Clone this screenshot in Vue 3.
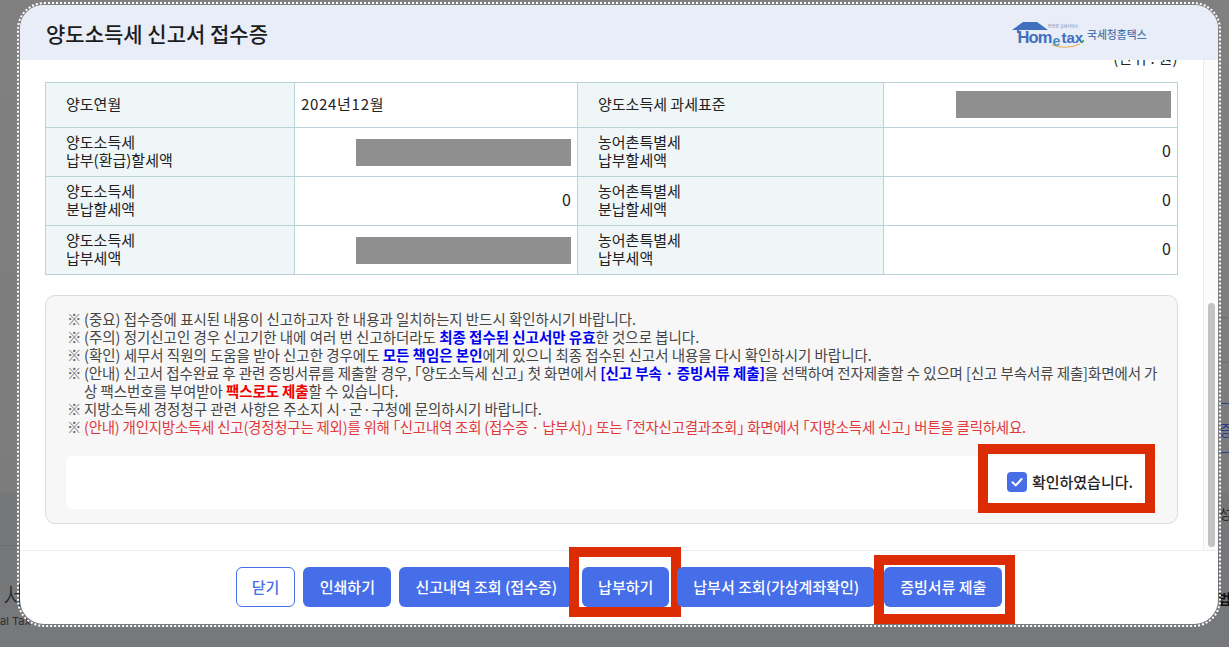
<script setup>
const rows = [
  { a: '양도연월', b: '2024년12월', bLeft: true, c: '양도소득세 과세표준', d: null },
  { a: '양도소득세\n납부(환급)할세액', b: null, c: '농어촌특별세\n납부할세액', d: '0' },
  { a: '양도소득세\n분납할세액', b: '0', c: '농어촌특별세\n분납할세액', d: '0' },
  { a: '양도소득세\n납부세액', b: null, c: '농어촌특별세\n납부세액', d: '0' }
]
</script>

<template>
  <div class="screen">
    <div class="back back-logo">세</div>
    <div class="back back-tax">al Tax</div>
    <div class="back left-line"></div>
    <div class="back back-blue">증</div>
    <div class="back back-r1">성</div>
    <div class="back back-r2">법:</div>
    <div class="back blue-line l1"></div>
    <div class="back blue-line l2"></div>
    <div class="back gray-line g1"></div>
    <div class="back gray-line g2"></div>

    <section class="modal">
      <header class="head">
        <h1>양도소득세 신고서 접수증</h1>
        <svg class="logo" width="140" height="30" viewBox="0 0 140 30" aria-label="Hometax 국세청홈택스">
          <path d="M2 12 L13 4 H27 L38 12 H13 L8 12 Z" fill="#3f6fbd" />
          <path d="M8 11 V15" stroke="#3f6fbd" stroke-width="2" fill="none" />
          <text x="7.5" y="24.5" class="lg-home">Hom</text>
          <text x="42.5" y="27.5" class="lg-e">e</text>
          <text x="51.5" y="24.5" class="lg-tax">tax</text>
          <circle cx="73" cy="23" r="1.2" fill="#55b848" />
          <path d="M42 27 Q56 32 70 26" stroke="#e4a948" stroke-width="1" fill="none" />
          <text x="38" y="10" class="lg-sub">안전성 실세서비스</text>
          <text x="77" y="21" class="lg-kr">국세청홈택스</text>
        </svg>
      </header>

      <div class="body">
        <div class="scroll">
          <p class="unit">(단위 : 원)</p>
          <table class="grid">
            <colgroup>
              <col class="c1" /><col class="c2" /><col class="c3" /><col class="c4" />
            </colgroup>
            <tbody>
              <tr v-for="(r, i) in rows" :key="i" :class="'r' + i">
                <th>{{ r.a }}</th>
                <td :class="{ start: r.bLeft, txt: r.b }">
                  <span v-if="r.b">{{ r.b }}</span>
                  <span v-else class="mask"></span>
                </td>
                <th>{{ r.c }}</th>
                <td :class="{ txt: r.d }">
                  <span v-if="r.d">{{ r.d }}</span>
                  <span v-else class="mask"></span>
                </td>
              </tr>
            </tbody>
          </table>

          <div class="notice">
            <ul>
              <li><i>※</i><span>(중요) 접수증에 표시된 내용이 신고하고자 한 내용과 일치하는지 반드시 확인하시기 바랍니다.</span></li>
              <li><i>※</i><span>(주의) 정기신고인 경우 신고기한 내에 여러 번 신고하더라도 <b class="blue">최종 접수된 신고서만 유효</b>한 것으로 봅니다.</span></li>
              <li><i>※</i><span>(확인) 세무서 직원의 도움을 받아 신고한 경우에도 <b class="blue">모든 책임은 본인</b>에게 있으니 최종 접수된 신고서 내용을 다시 확인하시기 바랍니다.</span></li>
              <li class="tight"><i>※</i><span>(안내) 신고서 접수완료 후 관련 증빙서류를 제출할 경우, <u class="bk">「</u>양도소득세 신고<u class="bk">」</u> 첫 화면에서 <b class="blue">[신고 부속 · 증빙서류 제출]</b>을 선택하여 전자제출할 수 있으며 [신고 부속서류 제출]화면에서 가<br />상 팩스번호를 부여받아 <b class="red">팩스로도 제출</b>할 수 있습니다.</span></li>
              <li><i>※</i><span>지방소득세 경정청구 관련 사항은 주소지 <u class="nar">시 · 군 · 구청에</u> 문의하시기 바랍니다.</span></li>
              <li><i>※</i><span class="alert">(안내) 개인지방소득세 신고(경정청구는 제외)를 위해 <u class="bk">「</u>신고내역 조회 (접수증 · 납부서)<u class="bk">」</u> 또는 <u class="bk">「</u>전자신고결과조회<u class="bk">」</u> 화면에서 <u class="bk">「</u>지방소득세 신고<u class="bk">」</u> 버튼을 클릭하세요.</span></li>
            </ul>
            <div class="confirm">
              <label class="check">
                <span class="box">
                  <svg width="20" height="20" viewBox="0 0 20 20"><path d="M5.5 10.2 L8.8 13.4 L14.6 7" stroke="#fff" stroke-width="2" fill="none" stroke-linecap="round" stroke-linejoin="round" /></svg>
                </span>
                확인하였습니다.
              </label>
              <div class="mark mark-check"></div>
            </div>
          </div>
        </div>
        <div class="bar"><div class="thumb"></div></div>
      </div>

      <footer class="foot">
        <button class="btn ghost">닫기</button>
        <button class="btn print">인쇄하기</button>
        <button class="btn">신고내역 조회 (접수증)</button>
        <button class="btn marked">납부하기<span class="mark mark-pay"></span></button>
        <button class="btn">납부서 조회(가상계좌확인)</button>
        <button class="btn marked">증빙서류 제출<span class="mark mark-doc"></span></button>
      </footer>
    </section>
  </div>
</template>

<style>
html, body { margin: 0; padding: 0; overflow: hidden; }
</style>

<style scoped>
.screen {
  position: relative;
  width: 1229px;
  height: 647px;
  overflow: hidden;
  padding: 5px 11px 23px 20px;
  box-sizing: border-box;
  background: linear-gradient(#808080 0, #7c7c7d 492px, #767779 494px, #77787b 647px);
  font-family: "Noto Sans CJK KR", "Noto Sans", sans-serif;
  color: #222;
}
.back { position: absolute; color: #222; line-height: 1; }
.back-logo { left: 3px; top: 581px; font-size: 28px; font-weight: 300; color: #2a2a2a; }
.back-tax { left: 0; top: 616px; font-size: 11px; font-family: "Inter", sans-serif; color: #2d2d2d; white-space: nowrap; }
.left-line { left: 0; top: 545px; width: 20px; height: 1px; background: #6d6e70; }
.back-blue { left: 1219px; top: 422px; font-size: 15px; color: #2a3f86; }
.back-r1 { left: 1219px; top: 506px; font-size: 14px; color: #2a2a2a; white-space: nowrap; }
.back-r2 { left: 1218px; top: 591px; font-size: 14px; font-weight: 700; color: #111; white-space: nowrap; }
.blue-line { left: 1219px; width: 10px; height: 1px; background: #2a3f86; }
.l1 { top: 403px; }
.l2 { top: 452px; }
.gray-line { left: 1219px; width: 10px; height: 1px; background: #6a6f70; }
.g1 { top: 317px; }
.g2 { top: 362px; }

.modal {
  position: relative;
  display: flex;
  flex-direction: column;
  height: 100%;
  border-radius: 24px;
  background: #fff;
  outline: 2px dotted #fff;
  outline-offset: 1px;
  overflow: hidden;
}
.head {
  flex: none;
  height: 55px;
  display: flex;
  align-items: center;
  justify-content: space-between;
  padding: 0 68px 0 26px;
  background: #e8edf7;
}
.head h1 {
  margin: 0;
  font-size: 21px;
  font-weight: 500;
  line-height: 28px;
  color: #1c1c1c;
}
.logo { display: block; margin-top: 1px; }
.lg-home { font: 700 16.5px "Liberation Sans", sans-serif; fill: #3f6fbd; letter-spacing: -0.9px; }
.lg-tax { font: 700 15px "Liberation Sans", sans-serif; fill: #3f6fbd; }
.lg-e { font: 700 14px "Liberation Sans", sans-serif; fill: #3f8fc4; }
.lg-sub { font-size: 4px; fill: #6f86b3; }
.lg-kr { font-size: 10.8px; font-weight: 500; fill: #4f74ab; }

.body { flex: 1; min-height: 0; display: flex; }
.scroll { flex: 1; min-width: 0; overflow: hidden; padding: 0 25px; }
.bar {
  flex: none;
  width: 15px;
  box-sizing: border-box;
  padding: 243px 3px 3px 4px;
  background: #fbfbfb;
  border-left: 1px solid #ececec;
}
.thumb { height: 244px; border-radius: 4px; background: #c2c2c2; }

.unit {
  margin: -11px 0 15px;
  text-align: right;
  font-size: 15px;
  letter-spacing: 0.3px;
  line-height: 18px;
  color: #222;
}

.grid {
  width: 1132px;
  table-layout: fixed;
  border-collapse: collapse;
  font-size: 15px;
  line-height: 18px;
  color: #222;
}
.c1 { width: 249px; }
.c2 { width: 283px; }
.c3 { width: 306px; }
.c4 { width: 294px; }
.grid th, .grid td { border: 1px solid #b9d3d8; padding: 0; }
.grid th {
  background: #eff6f7;
  text-align: left;
  font-weight: 400;
  padding: 0 0 2px 20px;
  white-space: pre-line;
}
.grid td { text-align: right; padding-right: 6px; font-size: 16px; }
.grid td.txt { padding-bottom: 4px; }
.grid td.start { text-align: left; padding-left: 6px; font-size: 15px; letter-spacing: 0.7px; }
.r0 { height: 45px; }
.r0 td, .grid .r0 td.txt { padding-bottom: 2px; }
.r1, .r2, .r3 { height: 49px; }
.mask {
  display: inline-block;
  vertical-align: middle;
  width: 215px;
  height: 27px;
  background: #8f8f8f;
}

.notice {
  margin-top: 20px;
  box-sizing: border-box;
  height: 229px;
  padding: 14px 20px;
  border: 1px solid #dcdcdc;
  border-radius: 10px;
  background: #f7f7f7;
}
.notice ul { margin: 0; padding: 0; list-style: none; font-size: 14.48px; line-height: 18px; color: #454545; white-space: nowrap; }
.notice li { display: flex; }
.notice li i { flex: none; width: 18px; padding-left: 1px; box-sizing: border-box; font-style: normal; color: #666; letter-spacing: 0; }
.notice b { font-weight: 700; }
.notice u { text-decoration: none; }
.bk { font-feature-settings: "halt"; }
.nar { word-spacing: -2.7px; }
.tight { letter-spacing: -0.07px; }
.blue { color: #0000f0; }
.red { color: #f00000; }
.alert { color: #e03a3f; letter-spacing: -0.22px; }

.confirm {
  position: relative;
  margin-top: 20px;
  height: 53px;
  box-sizing: border-box;
  padding: 0 24px 2px 0;
  display: flex;
  align-items: center;
  justify-content: flex-end;
  border-radius: 6px;
  background: #fff;
}
.check { display: flex; align-items: center; gap: 5px; font-size: 15px; font-weight: 500; color: #222; }
.box { width: 20px; height: 20px; border-radius: 4px; background: #476ee6; display: block; }
.box svg { display: block; }

.foot {
  flex: none;
  height: 74px;
  box-sizing: border-box;
  border-top: 1px solid #e6edf5;
  padding-top: 16px;
  display: flex;
  justify-content: center;
  gap: 8px;
}
.btn {
  position: relative;
  height: 40px;
  padding: 0 16px;
  border: 0;
  border-radius: 6px;
  background: #466ee8;
  color: #fff;
  font: 500 15px/38px "Noto Sans CJK KR", sans-serif;
  white-space: nowrap;
}
.print { padding: 0 16.5px; }
.marked { margin-left: 1px; }
.ghost { background: #fff; color: #466ee8; border: 1px solid #466ee8; padding: 0 15px; line-height: 36px; }
.mark { position: absolute; border: 10px solid #dc2c04; box-sizing: border-box; pointer-events: none; }
.mark-check { right: 2px; top: -12px; width: 177px; height: 69px; }
.mark-pay { left: -13px; top: -20px; width: 112px; height: 70px; }
.mark-doc { left: -10px; top: -12px; width: 141px; height: 69px; }
</style>
